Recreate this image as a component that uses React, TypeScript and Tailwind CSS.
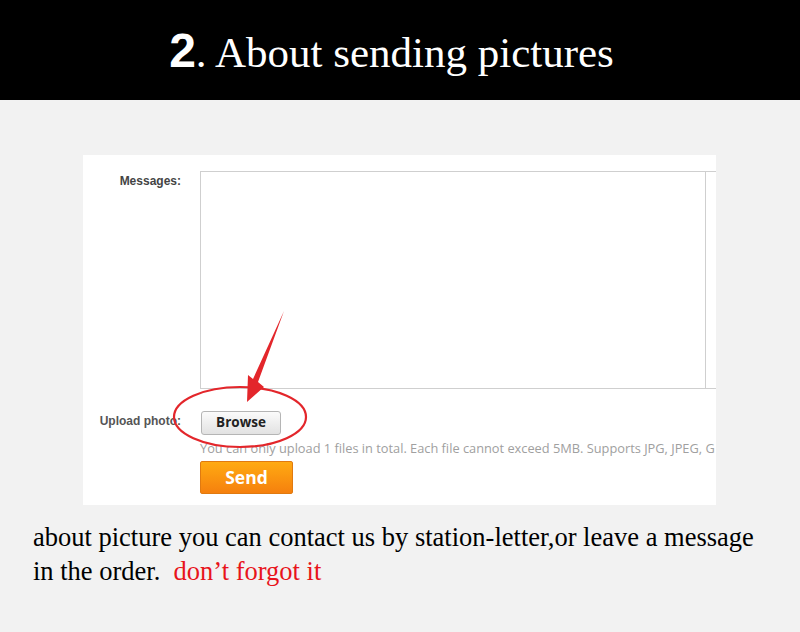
import React from 'react';

function Annotation() {
  return (
    <svg className="absolute left-0 top-0 pointer-events-none" width="633" height="350" viewBox="83 155 633 350">
      <ellipse cx="240" cy="417" rx="66" ry="30" fill="none" stroke="#e3262b" strokeWidth="2.2" />
      <polygon
        points="284,311 258,382 264,387 247,402 248,375 253,379 284,311"
        fill="#e3262b"
      />
    </svg>
  );
}

export default function App() {
  return (
    <div className="w-[800px] h-[632px] bg-[#f2f2f2] overflow-hidden">
      <div className="h-[100px] bg-black flex items-baseline justify-center pt-[27px] pr-[17px]">
        <span className="text-white text-[48px] font-bold leading-none font-['Liberation_Sans',sans-serif]">
          2
        </span>
        <span className="text-white text-[43px] leading-none font-['Liberation_Serif',serif]">
          . About sending pictures
        </span>
      </div>

      <div className="relative ml-[83px] mt-[55px] w-[633px] h-[350px] bg-white overflow-hidden">
        <div className="flex pt-[16px]">
          <div className="w-[117px] shrink-0 pr-[19px] pt-[1px] text-right text-[12px] font-bold text-[#444] font-['Liberation_Sans',sans-serif]">
            Messages:
          </div>
          <div className="w-[530px] h-[218px] shrink-0 border-t border-b border-l border-[#cfcfcf]">
            <div className="w-[505px] h-full border-r border-[#cfcfcf]"></div>
          </div>
        </div>

        <div className="flex mt-[22px]">
          <div className="w-[117px] shrink-0 pr-[19px] pt-[1px] text-right text-[12px] font-bold text-[#555] font-['Liberation_Sans',sans-serif] whitespace-nowrap">
            Upload photo:
          </div>
          <div className="flex flex-col min-w-0">
            <button className="ml-[1px] w-[80px] h-[24px] rounded-[3px] border border-[#b5b5b5] bg-gradient-to-b from-[#fbfbfb] to-[#e2e2e2] text-[13.5px] font-bold text-[#222] font-['Open_Sans',sans-serif] leading-none">
              Browse
            </button>
            <div className="mt-[6px] whitespace-nowrap text-[12.8px] text-[#a0a0a0] font-['Open_Sans',sans-serif] leading-[15px]">
              You can only upload 1 files in total. Each file cannot exceed 5MB. Supports JPG, JPEG, G
            </div>
            <button className="mt-[5px] w-[93px] h-[33px] rounded-[2px] bg-gradient-to-b from-[#ffaa12] to-[#f5800e] border border-[#e07a10] text-white text-[17.5px] font-bold font-['Open_Sans',sans-serif] leading-none">
              Send
            </button>
          </div>
        </div>

        <Annotation />
      </div>

      <div className="pl-[33px] pt-[15px] text-[26.5px] leading-[34px] text-black font-['Liberation_Serif',serif]">
        <div className="whitespace-nowrap">about picture you can contact us by station-letter,or leave a message</div>
        <div>
          in the order.&nbsp;&nbsp;<span className="text-[#e8141b]">don’t forgot it</span>
        </div>
      </div>
    </div>
  );
}
